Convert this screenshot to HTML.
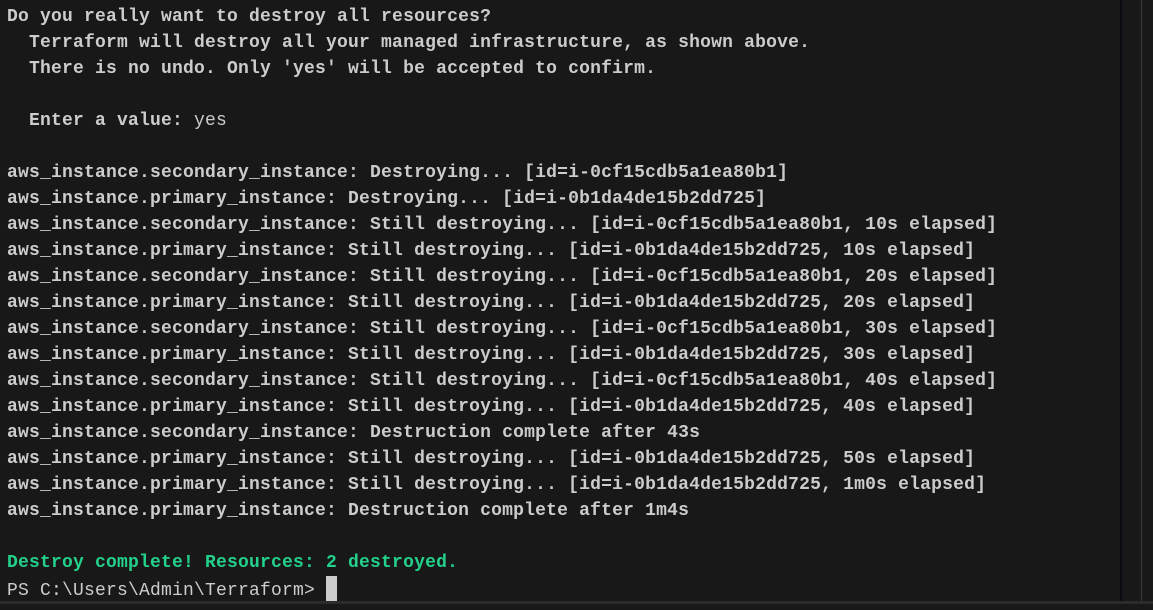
<!DOCTYPE html>
<html><head><style>
html,body{margin:0;padding:0;background:#181818;width:1153px;height:610px;overflow:hidden;position:relative}
pre{position:absolute;left:7px;top:4px;margin:0;font-family:"Liberation Mono",monospace;font-size:18px;letter-spacing:0.2px;line-height:26px;color:#cccccc;font-weight:bold}
.g{color:#23d18b}
.n{font-weight:normal}
.cur{display:inline-block;width:11px;height:25px;background:#cccccc;vertical-align:-6px;margin-left:11px}
.v1{position:absolute;left:1120px;top:0;width:2px;height:601px;background:#0a0a12}
.v2{position:absolute;left:1141px;top:0;width:1px;height:601px;background:#3a3a3a}
.b{position:absolute;left:0;top:601px;width:1153px;height:3px;background:#2b2b2b}
</style></head><body>
<pre>Do you really want to destroy all resources?
  Terraform will destroy all your managed infrastructure, as shown above.
  There is no undo. Only 'yes' will be accepted to confirm.

  Enter a value: <span class="n">yes</span>

aws_instance.secondary_instance: Destroying... [id=i-0cf15cdb5a1ea80b1]
aws_instance.primary_instance: Destroying... [id=i-0b1da4de15b2dd725]
aws_instance.secondary_instance: Still destroying... [id=i-0cf15cdb5a1ea80b1, 10s elapsed]
aws_instance.primary_instance: Still destroying... [id=i-0b1da4de15b2dd725, 10s elapsed]
aws_instance.secondary_instance: Still destroying... [id=i-0cf15cdb5a1ea80b1, 20s elapsed]
aws_instance.primary_instance: Still destroying... [id=i-0b1da4de15b2dd725, 20s elapsed]
aws_instance.secondary_instance: Still destroying... [id=i-0cf15cdb5a1ea80b1, 30s elapsed]
aws_instance.primary_instance: Still destroying... [id=i-0b1da4de15b2dd725, 30s elapsed]
aws_instance.secondary_instance: Still destroying... [id=i-0cf15cdb5a1ea80b1, 40s elapsed]
aws_instance.primary_instance: Still destroying... [id=i-0b1da4de15b2dd725, 40s elapsed]
aws_instance.secondary_instance: Destruction complete after 43s
aws_instance.primary_instance: Still destroying... [id=i-0b1da4de15b2dd725, 50s elapsed]
aws_instance.primary_instance: Still destroying... [id=i-0b1da4de15b2dd725, 1m0s elapsed]
aws_instance.primary_instance: Destruction complete after 1m4s

<span class="g">Destroy complete! Resources: 2 destroyed.</span>
<span class="n">PS C:\Users\Admin\Terraform&gt;</span><span class="cur"></span></pre>
<div class="v1"></div><div class="v2"></div><div class="b"></div>
</body></html>
